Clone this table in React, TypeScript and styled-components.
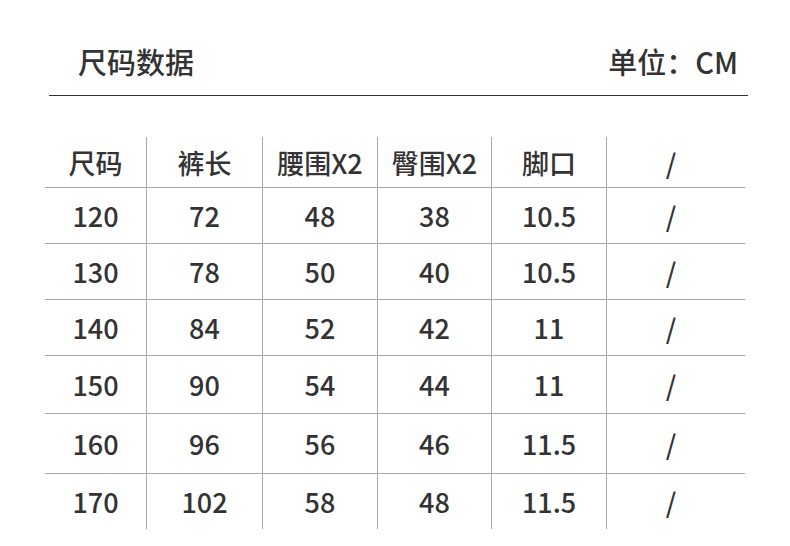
import React from "react";
import styled, { createGlobalStyle } from "styled-components";

const GlobalStyle = createGlobalStyle`
    html, body {
        margin: 0;
        padding: 0;
        background: #fff;
    }
    body {
        font-family: "Noto Sans CJK SC", "Noto Sans", sans-serif;
        color: #333;
    }
`;

const Page = styled.div`
    width: 790px;
    height: 546px;
    display: flex;
    flex-direction: column;
    overflow: hidden;
`;

const Header = styled.div`
    margin-left: 49px;
    width: 699px;
    height: 96px;
    box-sizing: border-box;
    padding: 0 10px 14px 29px;
    display: flex;
    align-items: flex-end;
    justify-content: space-between;
    border-bottom: solid 1px #333;
`;

const HeaderText = styled.div`
    font-size: 29px;
    font-weight: 500;
    line-height: 40px;
    color: #333;
`;

const Table = styled.div`
    margin: 41px 0 0 45px;
    width: 700px;
    display: flex;
    flex-direction: column;
`;

const Row = styled.div<{ $h: number; $last?: boolean }>`
    display: grid;
    grid-template-columns: 102px 116px 115px 114px 115px 138px;
    height: ${(p) => p.$h}px;
    box-sizing: border-box;
    border-bottom: ${(p) => (p.$last ? "none" : "solid 1px #aaa")};
`;

const Cell = styled.div<{ $last?: boolean }>`
    display: flex;
    align-items: center;
    justify-content: center;
    font-size: 27px;
    font-weight: 500;
    color: #333;
    box-sizing: border-box;
    border-right: ${(p) => (p.$last ? "none" : "solid 1px #aaa")};
    padding-right: ${(p) => (p.$last ? "10px" : "0")};
`;

const head = ["尺码", "裤长", "腰围X2", "臀围X2", "脚口", "/"];

const rows = [
    { cells: ["120", "72", "48", "38", "10.5", "/"], h: 56 },
    { cells: ["130", "78", "50", "40", "10.5", "/"], h: 56 },
    { cells: ["140", "84", "52", "42", "11", "/"], h: 56 },
    { cells: ["150", "90", "54", "44", "11", "/"], h: 58 },
    { cells: ["160", "96", "56", "46", "11.5", "/"], h: 60 },
    { cells: ["170", "102", "58", "48", "11.5", "/"], h: 55 },
];

const App = () => {
    return (
        <Page>
            <GlobalStyle />
            <Header>
                <HeaderText>尺码数据</HeaderText>
                <HeaderText>单位：CM</HeaderText>
            </Header>
            <Table>
                <Row $h={51}>
                    {head.map((text, i) => (
                        <Cell key={i} $last={i === head.length - 1}>{text}</Cell>
                    ))}
                </Row>
                {rows.map((row, r) => (
                    <Row key={r} $h={row.h} $last={r === rows.length - 1}>
                        {row.cells.map((text, i) => (
                            <Cell key={i} $last={i === row.cells.length - 1}>{text}</Cell>
                        ))}
                    </Row>
                ))}
            </Table>
        </Page>
    );
};

export default App;
